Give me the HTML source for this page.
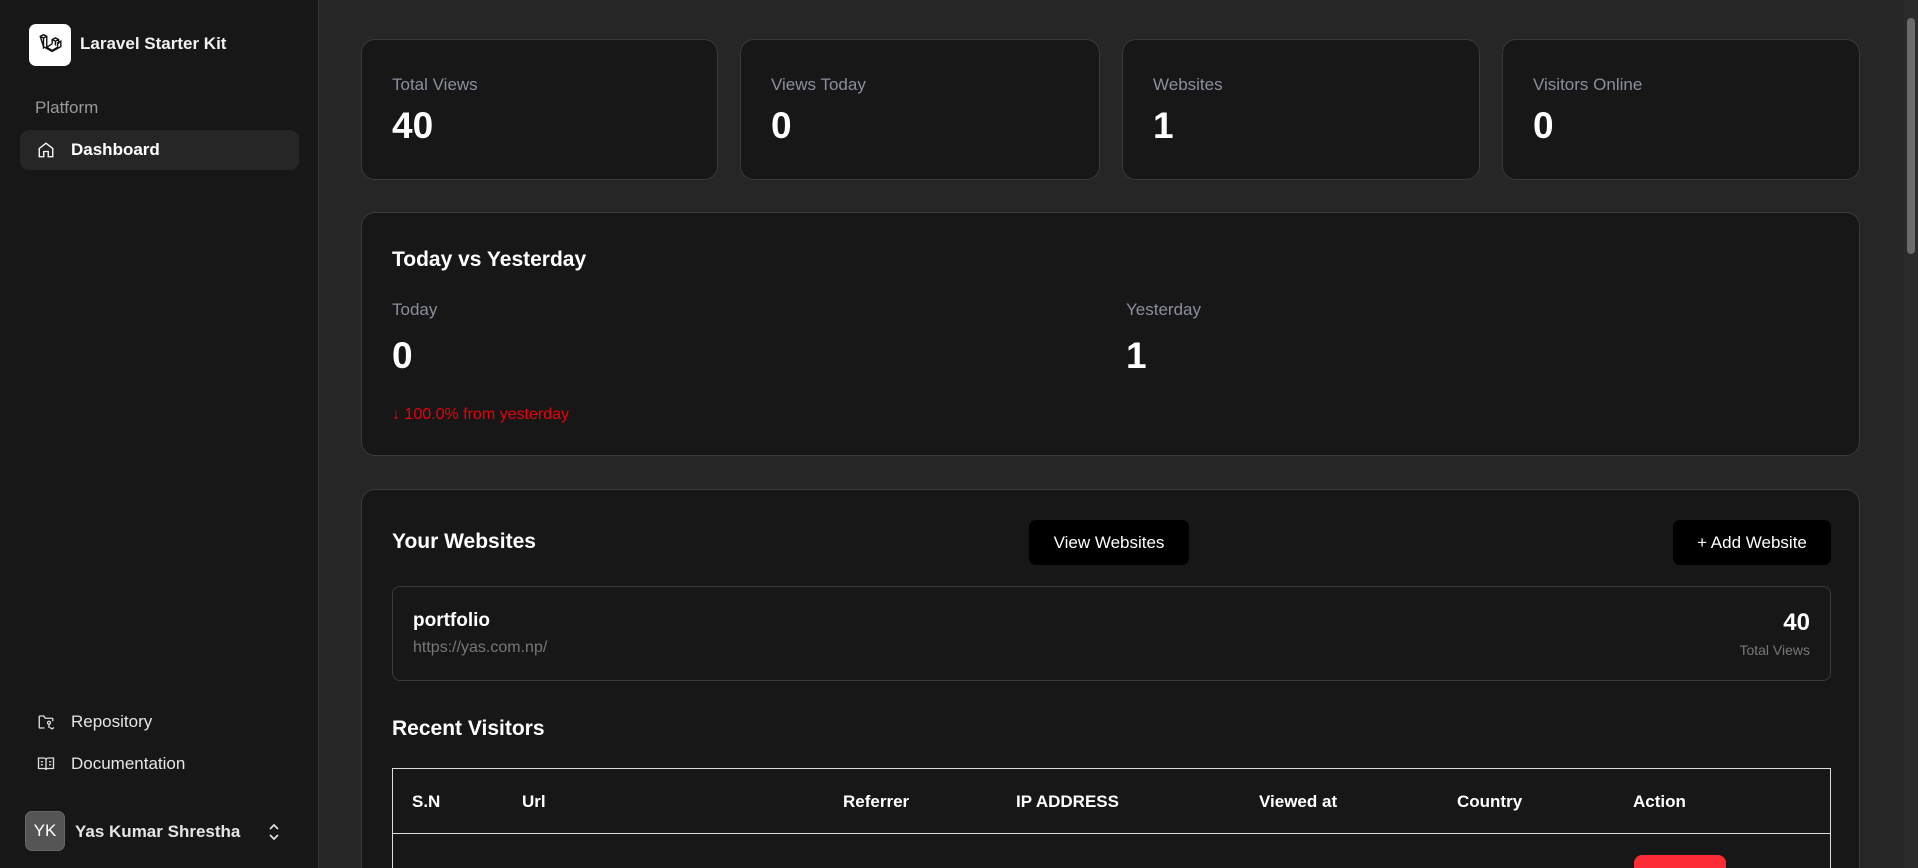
<!DOCTYPE html>
<html style="width:1918px;height:868px;overflow:hidden"><head><meta charset="utf-8"><style>
*{box-sizing:border-box;margin:0;padding:0}
body{width:1918px;height:868px;overflow:hidden;background:#262626;font-family:"Liberation Sans",sans-serif;color:#fff;position:relative}
.side{position:absolute;left:0;top:0;width:319px;height:868px;background:#171717;border-right:1px solid #333}
.abs{position:absolute}
.card{position:absolute;background:#171717;border:1px solid #3a3a3a;border-radius:14px}
.lbl{color:#8a8f9c;font-size:17px}
.num{font-size:37px;font-weight:bold}
.th{position:absolute;top:792px;font-size:17px;font-weight:bold}
.btn{position:absolute;background:#000;border-radius:7px;font-size:17px;display:flex;align-items:center;justify-content:center}
.nav{font-size:17px;color:#e5e5e5;display:flex;align-items:center;gap:16px}
</style></head><body>
<div class="side">
  <div class="abs" style="left:29px;top:24px;width:42px;height:42px;background:#fff;border-radius:7px;display:flex;align-items:center;justify-content:center">
    <svg width="26" height="26" viewBox="0 0 24 24" fill="none" stroke="#111" stroke-width="1.3"><path d="M3 4l3-1.5 3 1.5v10l5 3 5-3v-4l3-1.5v5l-8 4.5-8-4.5z M9 14l5-3 M14 11V7l3-1.5 3 1.5v4 M14 7l3 1.5 3-1.5 M17 8.5v4 M3 4l3 1.5 3-1.5 M6 5.5v10"/></svg>
  </div>
  <div class="abs" style="left:80px;top:34px;font-size:17px;font-weight:bold;color:#f0f0f0">Laravel Starter Kit</div>
  <div class="abs" style="left:35px;top:98px;font-size:17px;color:#9a9a9a">Platform</div>
  <div class="abs nav" style="left:20px;top:130px;width:279px;height:40px;background:#262626;border-radius:9px;padding-left:17px;color:#fff">
    <svg width="18" height="18" viewBox="0 0 24 24" fill="none" stroke="#fff" stroke-width="1.8"><path d="M3 10l9-7 9 7v11h-6v-7h-6v7H3z"/></svg><span style="font-weight:bold">Dashboard</span></div>
  <div class="abs nav" style="left:37px;top:712px">
    <svg width="18" height="18" viewBox="0 0 24 24" fill="none" stroke="#ddd" stroke-width="1.8"><path d="M10 20H4a1 1 0 01-1-1V5a1 1 0 011-1h5l2 3h9a1 1 0 011 1v3 M14 13a2 2 0 104 0 2 2 0 10-4 0 M16 15v5 M18 19a2 2 0 104 0"/></svg><span>Repository</span></div>
  <div class="abs nav" style="left:37px;top:754px">
    <svg width="18" height="18" viewBox="0 0 24 24" fill="none" stroke="#ddd" stroke-width="1.8"><path d="M2 4h7a3 3 0 013 3v13a2 2 0 00-2-2H2z M22 4h-7a3 3 0 00-3 3v13a2 2 0 012-2h8z M5 9h3 M5 13h3 M16 9h3 M16 13h3"/></svg><span>Documentation</span></div>
  <div class="abs" style="left:25px;top:811px;width:40px;height:40px;background:#555;border-radius:7px;border:1px solid #666;display:flex;align-items:center;justify-content:center;font-size:17px">YK</div>
  <div class="abs" style="left:75px;top:822px;font-size:17px;font-weight:bold;color:#e5e5e5">Yas Kumar Shrestha</div>
  <svg class="abs" style="left:266px;top:822px" width="16" height="20" viewBox="0 0 16 20" fill="none" stroke="#ddd" stroke-width="1.8"><path d="M4 7l4-4 4 4 M4 13l4 4 4-4"/></svg>
</div>

<div class="card" style="left:361px;top:39px;width:357px;height:141px"><div class="lbl abs" style="left:30px;top:35px">Total Views</div><div class="num abs" style="left:30px;top:65px">40</div></div>
<div class="card" style="left:740px;top:39px;width:360px;height:141px"><div class="lbl abs" style="left:30px;top:35px">Views Today</div><div class="num abs" style="left:30px;top:65px">0</div></div>
<div class="card" style="left:1122px;top:39px;width:358px;height:141px"><div class="lbl abs" style="left:30px;top:35px">Websites</div><div class="num abs" style="left:30px;top:65px">1</div></div>
<div class="card" style="left:1502px;top:39px;width:358px;height:141px"><div class="lbl abs" style="left:30px;top:35px">Visitors Online</div><div class="num abs" style="left:30px;top:65px">0</div></div>

<div class="card" style="left:361px;top:212px;width:1499px;height:244px">
  <div class="abs" style="left:30px;top:35px;font-size:21px;font-weight:bold">Today vs Yesterday</div>
  <div class="lbl abs" style="left:30px;top:87px">Today</div>
  <div class="num abs" style="left:30px;top:122px">0</div>
  <div class="abs" style="left:30px;top:193px;font-size:16px;color:#e7000b">↓ 100.0% from yesterday</div>
  <div class="lbl abs" style="left:764px;top:87px">Yesterday</div>
  <div class="num abs" style="left:764px;top:122px">1</div>
</div>

<div class="card" style="left:361px;top:489px;width:1499px;height:379px;overflow:hidden;border-bottom:none;border-radius:14px 14px 0 0">
  <div class="abs" style="left:30px;top:40px;font-size:21px;font-weight:bold">Your Websites</div>
  <div class="btn" style="left:667px;top:30px;width:160px;height:45px">View Websites</div>
  <div class="btn" style="left:1311px;top:30px;width:158px;height:45px">+ Add Website</div>
  <div class="abs" style="left:30px;top:96px;width:1439px;height:95px;border:1px solid #3a3a3a;border-radius:8px">
    <div class="abs" style="left:20px;top:23px;font-size:19px;font-weight:bold">portfolio</div>
    <div class="abs" style="left:20px;top:52px;font-size:16px;color:#777">https://yas.com.np/</div>
    <div class="abs" style="right:20px;top:22px;font-size:24px;font-weight:bold">40</div>
    <div class="abs" style="right:20px;top:55px;font-size:14px;color:#777">Total Views</div>
  </div>
  <div class="abs" style="left:30px;top:227px;font-size:21px;font-weight:bold">Recent Visitors</div>
  <div class="abs" style="left:30px;top:278px;width:1439px;height:200px;border:1px solid #ddd"></div>
  <div class="abs" style="left:30px;top:343px;width:1439px;height:1px;background:#ddd"></div>
  <div class="abs" style="left:1272px;top:365px;width:92px;height:50px;background:#fb2c36;border-radius:8px"></div>
</div>
<div class="th" style="left:412px">S.N</div>
<div class="th" style="left:522px">Url</div>
<div class="th" style="left:843px">Referrer</div>
<div class="th" style="left:1016px">IP ADDRESS</div>
<div class="th" style="left:1259px">Viewed at</div>
<div class="th" style="left:1457px">Country</div>
<div class="th" style="left:1633px">Action</div>

<div class="abs" style="left:1904px;top:0;width:14px;height:868px;background:#2b2b2b"></div>
<div class="abs" style="left:1907px;top:18px;width:8px;height:236px;background:#6b6b6b;border-radius:4px"></div>
</body></html>
